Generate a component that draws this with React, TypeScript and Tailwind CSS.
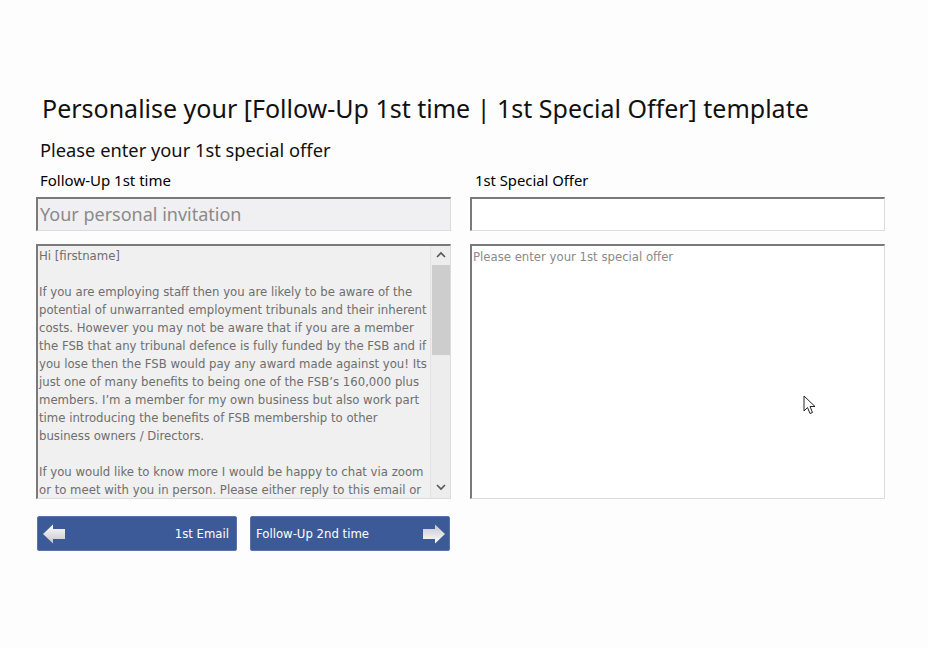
import React from 'react';

const bodyLines = [
  'Hi [firstname]',
  '',
  'If you are employing staff then you are likely to be aware of the',
  'potential of unwarranted employment tribunals and their inherent',
  'costs. However you may not be aware that if you are a member',
  'the FSB that any tribunal defence is fully funded by the FSB and if',
  'you lose then the FSB would pay any award made against you! Its',
  'just one of many benefits to being one of the FSB\u2019s 160,000 plus',
  'members. I\u2019m a member for my own business but also work part',
  'time introducing the benefits of FSB membership to other',
  'business owners / Directors.',
  '',
  'If you would like to know more I would be happy to chat via zoom',
  'or to meet with you in person. Please either reply to this email or',
];

const ArrowIcon: React.FC<{ dir: 'left' | 'right' }> = ({ dir }) => (
  <svg width="24" height="22" viewBox="0 0 24 22" className={dir === 'left' ? '' : 'rotate-180'}>
    <defs>
      <linearGradient id={`ag-${dir}`} x1="0" y1="0" x2="0" y2="1">
        <stop offset="0" stopColor="#ffffff" />
        <stop offset="1" stopColor="#c4c4cc" />
      </linearGradient>
    </defs>
    <polygon points="1,11 11,1.5 11,6 23,6 23,16 11,16 11,20.5" fill={`url(#ag-${dir})`} />
  </svg>
);

const inset = 'border-t-2 border-l-2 border-r border-b border-t-[#7a7a7a] border-l-[#7a7a7a] border-r-[#dcdcdc] border-b-[#dcdcdc]';
const tahoma = { fontFamily: '"DejaVu Sans Condensed", "Liberation Sans", sans-serif' };

export default function App() {
  return (
    <div className="relative min-h-[648px] bg-[#fdfdfd] text-black" style={{ fontFamily: '"Noto Sans", sans-serif' }}>
      <div className="pl-[36px] pt-[90px] w-[886px]">
        <h1 className="ml-[6px] text-[25px] leading-[36px] text-[#111]">
          Personalise your [Follow-Up 1st time | 1st Special Offer] template
        </h1>
        <h2 className="ml-[4px] mt-[11px] text-[18.3px] leading-[26px] text-[#111]">Please enter your 1st special offer</h2>
        <div className="mt-[5px] grid grid-cols-[415px_415px] gap-x-[19px]">
          <div className="flex flex-col">
            <div className="ml-[4px] text-[15px] leading-[20px] h-[29px] pt-[2px]">Follow-Up 1st time</div>
            <div className={`h-[34px] ${inset} bg-[#f0f0f2] flex items-center pl-[2px] text-[18px] text-[#8a8a8a]`}>
              Your personal invitation
            </div>
            <div className={`mt-[13px] h-[255px] ${inset} bg-[#f0f0f0] flex overflow-hidden`}>
              <div
                className="flex-1 pl-[1px] pt-[1px] text-[13px] leading-[18px] text-[#6e6e6e] whitespace-pre overflow-hidden"
                style={tahoma}
              >
                {bodyLines.map((l, i) => (
                  <div key={i} className="h-[18px]">{l || ' '}</div>
                ))}
              </div>
              <div className="w-[20px] bg-[#ededed] border-l border-[#e2e2e2] flex flex-col items-center">
                <svg width="10" height="19" viewBox="0 0 10 19">
                  <polyline points="1,11 5,7 9,11" fill="none" stroke="#555" strokeWidth="1.6" />
                </svg>
                <div className="w-[18px] h-[90px] bg-[#cdcdcd]" />
                <div className="flex-1" />
                <svg width="10" height="20" viewBox="0 0 10 20" className="mb-[1px]">
                  <polyline points="1,8 5,12 9,8" fill="none" stroke="#555" strokeWidth="1.6" />
                </svg>
              </div>
            </div>
            <div className="mt-[17px] flex gap-[13px] pl-[1px]">
              <button
                className="w-[200px] h-[35px] rounded-[2px] bg-[#3d5a98] border border-[#5a74aa] flex items-center justify-between pl-[4px] pr-[7px] text-white text-[13px]"
                style={tahoma}
              >
                <ArrowIcon dir="left" />
                <span>1st Email</span>
              </button>
              <button
                className="w-[200px] h-[35px] rounded-[2px] bg-[#3d5a98] border border-[#5a74aa] flex items-center justify-between pl-[5px] pr-[3px] text-white text-[13px]"
                style={tahoma}
              >
                <span>Follow-Up 2nd time</span>
                <ArrowIcon dir="right" />
              </button>
            </div>
          </div>
          <div className="flex flex-col">
            <div className="ml-[5px] text-[14.8px] leading-[20px] h-[29px] pt-[2px]">1st Special Offer</div>
            <div className={`h-[34px] ${inset} bg-white`} />
            <div className={`mt-[13px] h-[255px] ${inset} bg-white pl-[1px] pt-[2px] text-[13px] leading-[18px] text-[#8a8a8a]`}
              style={tahoma}
            >
              Please enter your 1st special offer
            </div>
          </div>
        </div>
      </div>
      <svg width="14" height="22" viewBox="0 0 14 22" className="absolute left-[803px] top-[395px]">
        <path d="M1,1 L1,16 L4.5,12.5 L7,18.5 L9.5,17.5 L7,11.5 L12,11.5 Z" fill="white" stroke="#222" strokeWidth="1" />
      </svg>
    </div>
  );
}
